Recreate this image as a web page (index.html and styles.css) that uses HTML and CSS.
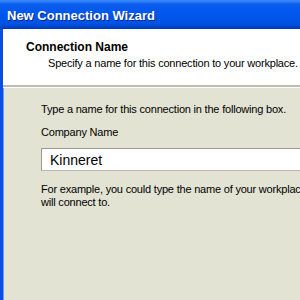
FILE: index.html
```html
<!DOCTYPE html>
<html>
<head>
    <title>New Connection Wizard</title>
    <link rel="stylesheet" href="styles.css">
</head>
<body>
<div class="window">
    <div class="titlebar">New Connection Wizard</div>
    <div class="frame">
        <div class="header">
            <div class="header-title">Connection Name</div>
            <div class="header-sub">Specify a name for this connection to your workplace.</div>
        </div>
        <div class="content">
            <p class="line">Type a name for this connection in the following box.</p>
            <label class="label" for="company">Company Name</label>
            <input type="text" id="company" class="textbox" value="Kinneret">
            <p class="hint">For example, you could type the name of your workplace or the name of a server you<br>will connect to.</p>
        </div>
    </div>
</div>
</body>
</html>
```

FILE: styles.css
```css
* {
	box-sizing: border-box;
}

body {
	margin: 0;
	width: 300px;
	height: 300px;
	overflow: hidden;
	font-family: "Liberation Sans", Arial, sans-serif;
	font-size: 11px;
	letter-spacing: -0.2px;
	color: #000;
}

.window {
	width: 300px;
	height: 300px;
	display: flex;
	flex-direction: column;
	overflow: hidden;
}

.titlebar {
	height: 29px;
	padding: 8px 0 0 7px;
	background: linear-gradient(to bottom, #3b8cff 0px, #2a78f5 2px, #0a5ded 4px, #0058ee 12px, #0052e4 24px, #0043c8 27px, #003bb8 29px);
	color: #fff;
	font-weight: bold;
	font-size: 13px;
	letter-spacing: 0;
	text-shadow: 1px 1px 0 #0a2a8a;
	white-space: nowrap;
}

.frame {
	flex: 1;
	display: flex;
	flex-direction: column;
	border-left: 3px solid #0a4fe4;
	box-shadow: inset 1px 0 0 #6b9cf0;
	background: #e3e3d3;
}

.header {
	height: 58px;
	background: #fff;
	padding: 11px 0 0 23px;
	border-bottom: 2px solid #c0bdb0;
	box-shadow: 0 1px 0 #fff;
	white-space: nowrap;
}

.header-title {
	font-weight: bold;
	font-size: 12px;
	letter-spacing: 0;
}

.header-sub {
	margin: 3px 0 0 22px;
}

.content {
	padding: 16px 0 0 38px;
	white-space: nowrap;
}

.line {
	margin: 0;
}

.label {
	display: block;
	margin-top: 11px;
}

.textbox {
	display: block;
	margin-top: 10px;
	width: 300px;
	height: 23px;
	padding: 0 0 0 8px;
	border: 1px solid #9a9a90;
	border-bottom-color: #b9b8ae;
	background: #fff;
	font-family: "Liberation Sans", Arial, sans-serif;
	font-size: 14px;
	color: #000;
	outline: none;
}

.hint {
	margin: 12px 0 0 0;
	line-height: 13px;
}
```
